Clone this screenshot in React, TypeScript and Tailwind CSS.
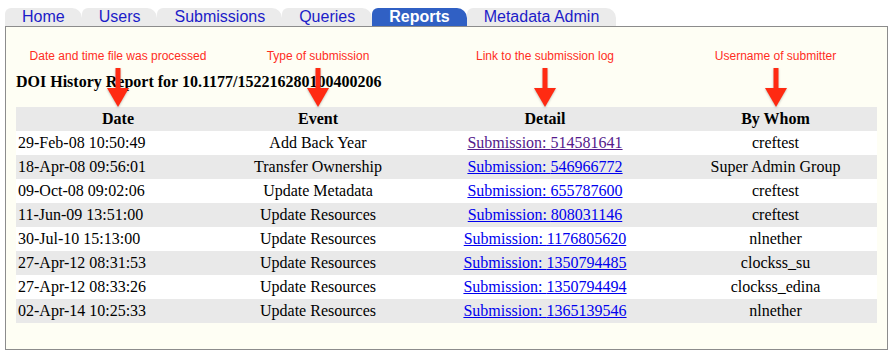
import React from "react";

const tabs = [
  { label: "Home" },
  { label: "Users" },
  { label: "Submissions" },
  { label: "Queries" },
  { label: "Reports", active: true },
  { label: "Metadata Admin" },
];

const notes = [
  "Date and time file was processed",
  "Type of submission",
  "Link to the submission log",
  "Username of submitter",
];

const rows = [
  { date: "29-Feb-08 10:50:49", event: "Add Back Year", id: "514581641", who: "creftest", visited: true },
  { date: "18-Apr-08 09:56:01", event: "Transfer Ownership", id: "546966772", who: "Super Admin Group" },
  { date: "09-Oct-08 09:02:06", event: "Update Metadata", id: "655787600", who: "creftest" },
  { date: "11-Jun-09 13:51:00", event: "Update Resources", id: "808031146", who: "creftest" },
  { date: "30-Jul-10 15:13:00", event: "Update Resources", id: "1176805620", who: "nlnether" },
  { date: "27-Apr-12 08:31:53", event: "Update Resources", id: "1350794485", who: "clockss_su" },
  { date: "27-Apr-12 08:33:26", event: "Update Resources", id: "1350794494", who: "clockss_edina" },
  { date: "02-Apr-14 10:25:33", event: "Update Resources", id: "1365139546", who: "nlnether" },
];

// column widths shared by the table and the callout layer above it
const cols = "grid grid-cols-[204px_196px_258px_203px]";

const Arrow = () => (
  <svg width="22" height="40" viewBox="0 0 22 40" className="mt-[5px] drop-shadow-[0_1px_1px_rgba(0,0,0,0.25)]">
    <rect x="8.5" y="0" width="5" height="21" fill="#ff2a12" />
    <polygon points="0,20 22,20 11,39" fill="#ff2a12" />
  </svg>
);

export default function App() {
  return (
    <div className="w-[892px] h-[353px] bg-white pt-[8px] pl-[5px] overflow-hidden">
      <div className="flex h-[18px] font-['Liberation_Sans',Arial,sans-serif] text-[16px] leading-[18px]">
        {tabs.map((t) => (
          <div
            key={t.label}
            className={
              t.active
                ? "px-[17px] rounded-tl-[6px] rounded-tr-[10px] bg-[#3060c4] text-white font-bold"
                : "px-[17px] rounded-tl-[6px] rounded-tr-[10px] bg-[#ebebeb] text-[#1c1cc8]"
            }
          >
            {t.label}
          </div>
        ))}
      </div>

      <div className="w-[883px] h-[324px] border border-[#8c8c8c] bg-[#fefef4] px-[10px]">
        <div className="relative">
          <div className="absolute left-0 top-[22px] z-10 pointer-events-none">
            <div className={cols}>
              {notes.map((n) => (
                <div key={n} className="flex flex-col items-center">
                  <span className="font-['Liberation_Sans',Arial,sans-serif] text-[12px] leading-[14px] text-[#ff2d1e] whitespace-nowrap">
                    {n}
                  </span>
                  <Arrow />
                </div>
              ))}
            </div>
          </div>

          <h1 className="pt-[45px] font-['Liberation_Serif','Times_New_Roman',serif] font-bold text-[16px] leading-[20px] text-black">
            DOI History Report for 10.1177/152216280100400206
          </h1>

          <div className="mt-[15px] w-[861px] font-['Liberation_Serif','Times_New_Roman',serif] text-[16px] leading-[24px] text-black">
            <div className={`${cols} h-[24px] bg-[#e9e9e9] font-bold text-center`}>
              <div>Date</div>
              <div>Event</div>
              <div>Detail</div>
              <div>By Whom</div>
            </div>
            {rows.map((r, i) => (
              <div key={r.id} className={`${cols} h-[24px] ${i % 2 === 0 ? "bg-white" : "bg-[#e9e9e9]"}`}>
                <div className="pl-[2px]">{r.date}</div>
                <div className="text-center">{r.event}</div>
                <div className="text-center">
                  <a href="#" className={r.visited ? "underline text-[#551a8b]" : "underline text-[#0000ee]"}>
                    Submission: {r.id}
                  </a>
                </div>
                <div className="text-center">{r.who}</div>
              </div>
            ))}
          </div>
        </div>
      </div>
    </div>
  );
}
